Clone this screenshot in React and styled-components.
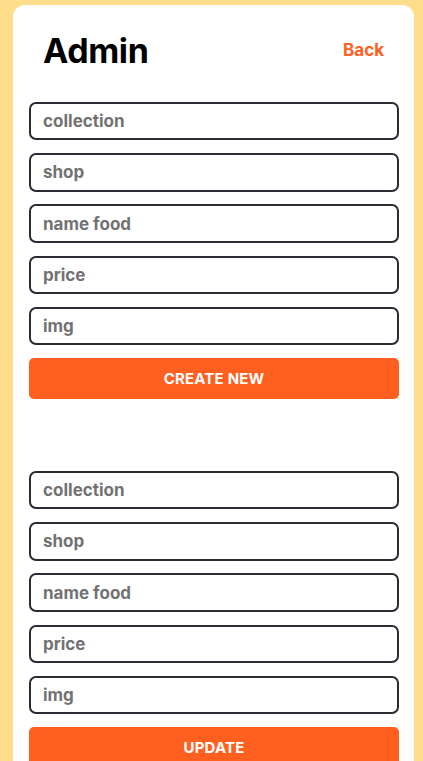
import React from 'react';
import styled, { createGlobalStyle } from 'styled-components';

const GlobalStyle = createGlobalStyle`
  html, body {
    margin: 0;
    padding: 0;
    background: #ffde8b;
    font-family: Inter, "Open Sans", sans-serif;
  }
`;

const Page = styled.div`
  padding: 5px 9px 0 13px;
  min-height: 100vh;
  box-sizing: border-box;
`;

const Card = styled.div`
  background: #fff;
  border-radius: 12px;
  padding: 0 15px 30px 16px;
`;

const Header = styled.header`
  display: flex;
  justify-content: space-between;
  align-items: center;
  height: 90px;
  padding: 0 15px 0 14px;
  margin-bottom: 7px;
`;

const Title = styled.h1`
  margin: 0;
  font-size: 34px;
  font-weight: 700;
  color: #000;
  letter-spacing: -0.4px;
`;

const BackLink = styled.a`
  color: #ff5f1f;
  font-size: 17px;
  font-weight: 700;
  text-decoration: none;
  cursor: pointer;
`;

const Form = styled.form`
  display: flex;
  flex-direction: column;
  gap: 12.8px;
  margin-bottom: ${p => p.$spaced ? '72px' : '0'};
`;

const Field = styled.input`
  box-sizing: border-box;
  height: 38.4px;
  width: 100%;
  border: 2px solid #2a2b33;
  border-radius: 7px;
  padding: 0 12px;
  font-family: inherit;
  font-size: 17px;
  font-weight: 700;
  color: #333;
  outline: none;
  &::placeholder {
    color: #727272;
  }
`;

const Submit = styled.button`
  height: 41px;
  width: 100%;
  border: 0;
  border-radius: 5px;
  background: #ff5f1f;
  color: #fff;
  font-family: inherit;
  font-size: 15px;
  font-weight: 700;
  letter-spacing: 0.2px;
  text-transform: uppercase;
  cursor: pointer;
`;

const fields = ['collection', 'shop', 'name food', 'price', 'img'];

const FoodForm = ({ label, spaced }) => (
  <Form $spaced={spaced} onSubmit={e => e.preventDefault()}>
    {fields.map(f => <Field key={f} type="text" placeholder={f} />)}
    <Submit type="submit">{label}</Submit>
  </Form>
);

export default function App() {
  return (
    <Page>
      <GlobalStyle />
      <Card>
        <Header>
          <Title>Admin</Title>
          <BackLink>Back</BackLink>
        </Header>
        <FoodForm label="create new" spaced />
        <FoodForm label="update" />
      </Card>
    </Page>
  );
}
